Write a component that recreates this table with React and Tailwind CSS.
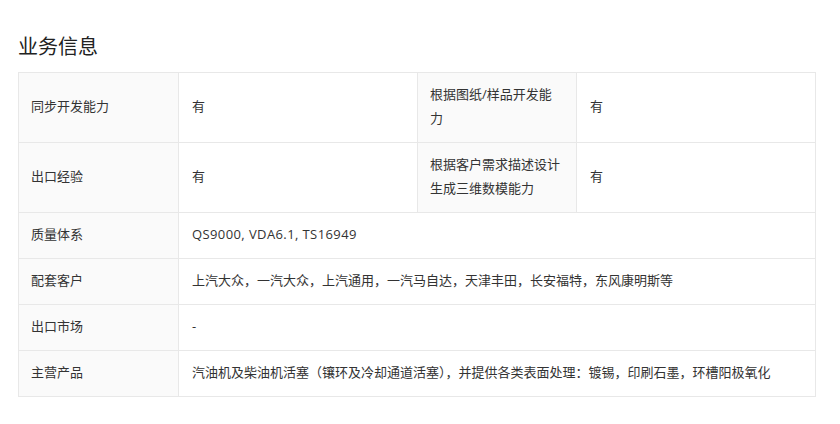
import React from 'react';

const rows = [
  { label: '质量体系', value: <span className="tracking-[0.4px]">QS9000, VDA6.1, TS16949</span> },
  { label: '配套客户', value: '上汽大众，一汽大众，上汽通用，一汽马自达，天津丰田，长安福特，东风康明斯等' },
  { label: '出口市场', value: '-' },
  { label: '主营产品', value: '汽油机及柴油机活塞（镶环及冷却通道活塞），并提供各类表面处理：镀锡，印刷石墨，环槽阳极氧化' },
];

const th = 'border border-[#e8e8e8] bg-[#fafafa] px-3 pt-[9px] pb-[12px] text-left font-normal align-middle';
const td = 'border border-[#e8e8e8] bg-white px-[13px] pt-[9px] pb-[12px] text-left align-middle';

const App = () => {
  return (
    <div className="w-[840px] h-[424px] bg-white px-[18px] pt-[34px] text-[#333] [font-family:'Open_Sans','Noto_Sans_CJK_SC',sans-serif]">
      <h2 className="text-[20px] leading-[26px] font-normal text-[#222] mb-[12px]">业务信息</h2>
      <table className="w-[797px] table-fixed border-collapse text-[13px] leading-6">
        <colgroup>
          <col className="w-[160px]" />
          <col className="w-[239px]" />
          <col className="w-[159px]" />
          <col className="w-[239px]" />
        </colgroup>
        <tbody>
          <tr>
            <th className={th}>同步开发能力</th>
            <td className={td}>有</td>
            <th className={th}>根据图纸/样品开发能力</th>
            <td className={td}>有</td>
          </tr>
          <tr>
            <th className={th}>出口经验</th>
            <td className={td}>有</td>
            <th className={th}>根据客户需求描述设计生成三维数模能力</th>
            <td className={td}>有</td>
          </tr>
          {rows.map((row) => (
            <tr key={row.label}>
              <th className={th}>{row.label}</th>
              <td className={td} colSpan={3}>{row.value}</td>
            </tr>
          ))}
        </tbody>
      </table>
    </div>
  );
};

export default App;
